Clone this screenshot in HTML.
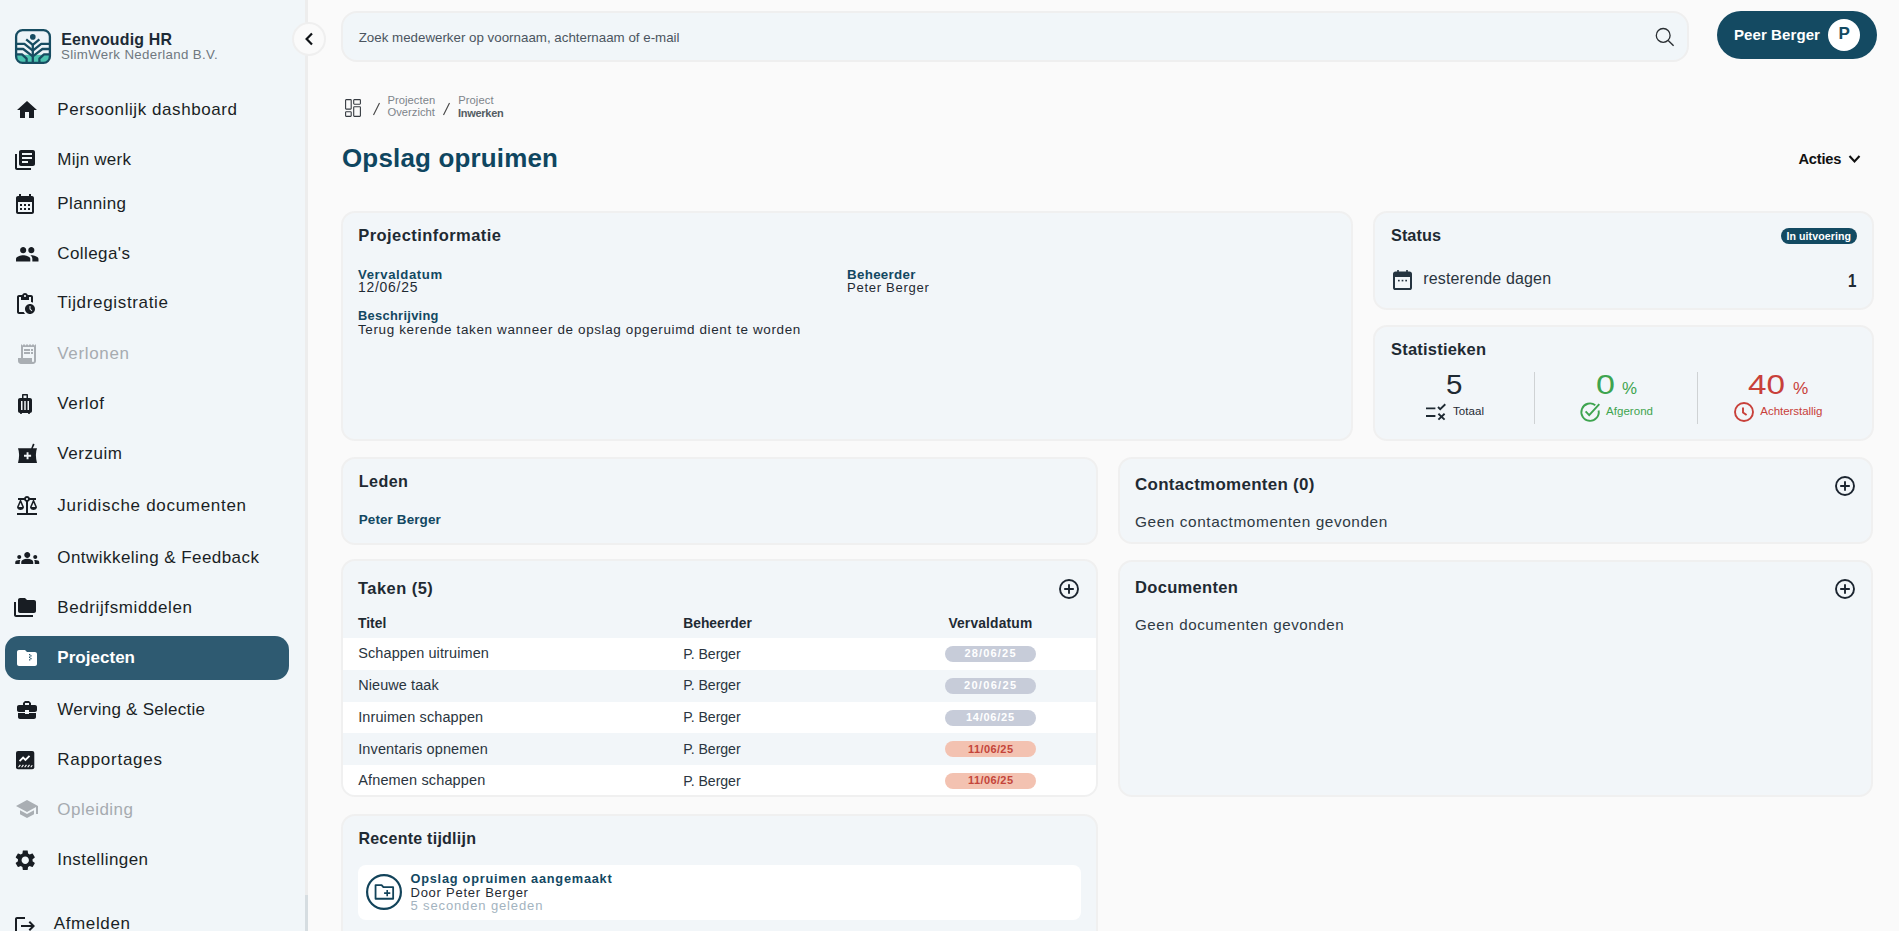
<!DOCTYPE html>
<html lang="nl"><head><meta charset="utf-8"><title>Opslag opruimen</title>
<style>
html,body{margin:0;padding:0;width:1899px;height:931px;overflow:hidden;background:#fafafa;font-family:"Liberation Sans",sans-serif;}
.t{position:absolute;white-space:nowrap;}
.a{position:absolute;}
.side{position:absolute;left:0;top:0;width:305px;height:931px;background:#f1f6f9;}
.track{position:absolute;left:305px;top:0;width:3px;height:931px;background:#ededed;}
.thumb{position:absolute;left:305px;top:895px;width:3px;height:36px;background:#d6dde1;}
.card{position:absolute;box-sizing:border-box;background:#f2f6f9;border:2px solid #f0f0f0;border-radius:14px;overflow:hidden;}
.row{position:absolute;left:0;width:100%;}
.badge{position:absolute;left:603px;width:91px;height:16px;border-radius:8px;}
svg{position:absolute;overflow:visible;}
</style></head><body>
<div class="side"></div>
<div class="track"></div>
<div class="thumb"></div>
<div class="a" style="left:5px;top:636px;width:284px;height:44px;border-radius:14px;background:#2e5a71"></div>

<!-- logo -->
<svg style="left:14.8px;top:28.8px" width="36" height="35" viewBox="0 0 36 35">
  <defs><clipPath id="lc"><rect x="1" y="1" width="34" height="33" rx="6.5"/></clipPath></defs>
  <rect x="1" y="1" width="34" height="33" rx="6.5" fill="#edf4f8"/>
  <g clip-path="url(#lc)">
    <rect x="0" y="25.8" width="36" height="10" fill="#4cc3b0"/>
    <g fill="none" stroke="#174d62" stroke-width="2.3" stroke-linejoin="round">
      <path d="M11.2 10.3 L17.8 15.8 L24.4 10.3"/>
      <path d="M17.8 15 L17.8 35"/>
      <path d="M0 14.8 L9.4 14.8 L17.8 21.6 L26.2 14.8 L36 14.8"/>
      <path d="M0 20 L8.2 20 L17.8 27.4 L27.4 20 L36 20"/>
      <path d="M0 25.4 L7 25.4 L11.6 29.6 L11.6 35 M36 25.4 L29 25.4 L24.4 29.6 L24.4 35"/>
    </g>
  </g>
  <circle cx="17.8" cy="7.9" r="2.8" fill="#174d62"/>
  <rect x="1.1" y="1.1" width="33.8" height="32.8" rx="6.5" fill="none" stroke="#174d62" stroke-width="2.3"/>
</svg>

<!-- nav icons -->
<svg style="left:15.4px;top:97.8px" width="24" height="24" viewBox="0 0 24 24"><path fill="#181d23" d="M10 20v-6h4v6h5v-8h3L12 3 2 12h3v8z"/></svg>
<svg style="left:13px;top:147.7px" width="24" height="24" viewBox="0 0 24 24"><path fill="#181d23" d="M4 6H2v14c0 1.1.9 2 2 2h14v-2H4V6zm16-4H8c-1.1 0-2 .9-2 2v12c0 1.1.9 2 2 2h12c1.1 0 2-.9 2-2V4c0-1.1-.9-2-2-2zm-1 9H9V9h10v2zm-4 4H9v-2h6v2zm4-8H9V5h10v2z"/></svg>
<svg style="left:13px;top:192px" width="24" height="24" viewBox="0 0 24 24"><path fill="#181d23" d="M19 4h-1V2h-2v2H8V2H6v2H5c-1.11 0-1.99.9-1.99 2L3 20c0 1.1.89 2 2 2h14c1.1 0 2-.9 2-2V6c0-1.1-.9-2-2-2zm0 16H5V10h14v10zM9 14H7v-2h2v2zm4 0h-2v-2h2v2zm4 0h-2v-2h2v2zm-8 4H7v-2h2v2zm4 0h-2v-2h2v2zm4 0h-2v-2h2v2z"/></svg>
<svg style="left:14.7px;top:242px" width="24.5" height="24.5" viewBox="0 0 24 24"><path fill="#181d23" d="M16 11c1.66 0 2.99-1.34 2.99-3S17.66 5 16 5c-1.66 0-3 1.34-3 3s1.34 3 3 3zm-8 0c1.66 0 2.99-1.34 2.99-3S9.66 5 8 5C6.34 5 5 6.34 5 8s1.34 3 3 3zm0 2c-2.33 0-7 1.17-7 3.5V19h14v-2.5c0-2.33-4.67-3.5-7-3.5zm8 0c-.29 0-.62.02-.97.05 1.16.84 1.97 1.97 1.97 3.45V19h6v-2.5c0-2.33-4.67-3.5-7-3.5z"/></svg>
<svg style="left:12.7px;top:292px" width="24" height="24" viewBox="0 0 24 24"><path fill="#181d23" d="M17 12c-2.76 0-5 2.24-5 5s2.24 5 5 5 5-2.24 5-5-2.24-5-5-5zm1.65 7.35L16.5 17.2V14h1v2.79l1.85 1.85-.7.71zM18 3h-3.18C14.4 1.84 13.3 1 12 1s-2.4.84-2.82 2H6c-1.1 0-2 .9-2 2v15c0 1.1.9 2 2 2h6.11c-.59-.57-1.07-1.25-1.42-2H6V5h2v3h8V5h2v5.08c.71.1 1.38.31 2 .6V5c0-1.1-.9-2-2-2zm-6 2c-.55 0-1-.45-1-1s.45-1 1-1 1 .45 1 1-.45 1-1 1z"/></svg>
<svg style="left:14.8px;top:342px" width="24" height="24" viewBox="0 0 24 24"><g fill="#a9aeb3"><path d="M19.5 3.5 18 2l-1.5 1.5L15 2l-1.5 1.5L12 2l-1.5 1.5L9 2 7.5 3.5 6 2v14H3v3c0 1.66 1.34 3 3 3h12c1.66 0 3-1.34 3-3V2l-1.5 1.5zM19 19c0 .55-.45 1-1 1s-1-.45-1-1v-3H8V5h11v14z"/><path d="M9 7h6v2H9zm7 0h2v2h-2zm-7 3h6v2H9zm7 0h2v2h-2z"/></g></svg>
<svg style="left:12.8px;top:392px" width="24" height="24" viewBox="0 0 24 24"><path fill="#181d23" d="M17 6h-2V3c0-.55-.45-1-1-1h-4c-.55 0-1 .45-1 1v3H7c-1.1 0-2 .9-2 2v11c0 1.1.9 2 2 2 0 .55.45 1 1 1s1-.45 1-1h6c0 .55.45 1 1 1s1-.45 1-1c1.1 0 2-.9 2-2V8c0-1.1-.9-2-2-2zM9.5 18H8V9h1.5v9zm3.25 0h-1.5V9h1.5v9zm.75-12h-3V3.5h3V6zM16 18h-1.5V9H16v9z"/></svg>
<svg style="left:17.6px;top:442.7px" width="19" height="20" viewBox="0 0 19 20"><path fill="#181d23" d="M0 5.3 H19 Q16.8 11.3 19 20 H0 Q2.2 11.3 0 5.3 Z M13.2 5.3 L15 0.6 L16.6 1.6 L14.8 5.3 Z"/><path fill="#f1f6f9" d="M8.6 9.2h1.9v2.6h2.6v1.9h-2.6v2.6H8.6v-2.6H6v-1.9h2.6z"/></svg>
<svg style="left:14.7px;top:493.7px" width="24" height="24" viewBox="0 0 24 24"><path fill="#181d23" d="M13 7.83c.85-.3 1.530-.98 1.83-1.83H18l-3 7c0 1.66 1.57 3 3.5 3s3.5-1.34 3.5-3l-3-7h2V4h-6.17c-.41-1.170-1.52-2-2.83-2s-2.42.83-2.83 2H3v2h2l-3 7c0 1.66 1.57 3 3.5 3S9 14.66 9 13L6 6h3.17c.3.85.98 1.53 1.83 1.83V19H2v2h20v-2h-9V7.83zM20.37 13h-3.74l1.87-4.36L20.370 13zm-13 0H3.63L5.5 8.64 7.37 13zM12 6c-.55 0-1-.45-1-1s.45-1 1-1 1 .45 1 1-.45 1-1 1z"/></svg>
<svg style="left:14.6px;top:546px" width="24.5" height="24" viewBox="0 0 24 24"><path fill="#181d23" d="M12 12.75c1.63 0 3.07.39 4.24.9 1.08.48 1.76 1.56 1.76 2.73V18H6v-1.61c0-1.18.68-2.26 1.76-2.73 1.17-.52 2.61-.91 4.24-.91zM4 13c1.1 0 2-.9 2-2s-.9-2-2-2-2 .9-2 2 .9 2 2 2zm1.13 1.1c-.37-.06-.74-.1-1.13-.1-.99 0-1.930.21-2.78.58C.48 14.9 0 15.62 0 16.43V18h4.5v-1.61c0-.83.23-1.61.63-2.29zM20 13c1.1 0 2-.9 2-2s-.9-2-2-2-2 .9-2 2 .9 2 2 2zm4 3.43c0-.81-.48-1.53-1.22-1.85-.85-.37-1.79-.58-2.78-.58-.39 0-.76.04-1.13.1.4.68.63 1.46.63 2.29V18H24v-1.57zM12 6c1.66 0 3 1.34 3 3s-1.34 3-3 3-3-1.34-3-3 1.34-3 3-3z"/></svg>
<svg style="left:13px;top:596px" width="24" height="24" viewBox="0 0 24 24"><g fill="#181d23"><path d="M3 6H1v13c0 1.1.9 2 2 2h17v-2H3V6z"/><path d="M21 4h-7l-2-2H7c-1.1 0-1.99.9-1.99 2L5 15c0 1.1.9 2 2 2h14c1.1 0 2-.9 2-2V6c0-1.1-.9-2-2-2z"/></g></svg>
<svg style="left:14.7px;top:645.8px" width="24" height="24" viewBox="0 0 24 24"><path fill="#ffffff" d="M4 4h6l2 2h8c1.1 0 2 .9 2 2v10c0 1.1-.9 2-2 2H4c-1.1 0-2-.9-2-2V6c0-1.1.9-2 2-2z"/><path fill="#2e5a71" d="M14 8h1.3v1.3H14zM15.3 9.3h1.3v1.3h-1.3zM14 10.6h1.3v1.3H14zM15.3 11.9h1.3v1.3h-1.3zM14 13.2h1.3v1.3H14z"/></svg>
<svg style="left:15px;top:697.7px" width="24" height="24" viewBox="0 0 24 24"><path fill="#181d23" d="M10 16v-1H3.01L3 19c0 1.11.89 2 2 2h14c1.11 0 2-.89 2-2v-4h-7v1h-4zm10-9h-4.01V5l-2-2h-4l-2 2v2H4c-1.1 0-2 .9-2 2v3c0 1.11.89 2 2 2h6v-2h4v2h6c1.1 0 2-.9 2-2V9c0-1.1-.9-2-2-2zm-6 0h-4V5h4v2z"/></svg>
<svg style="left:15.7px;top:750.7px" width="18.3" height="18.3" viewBox="0 0 18 18"><rect x="0" y="0" width="18" height="18" rx="2" fill="#181d23"/><path d="M3.5 10 L7 6.5 L9.3 8.8 L13.3 4.8" fill="none" stroke="#fff" stroke-width="1.8"/><path d="M2.5 16 L4.3 13.6 M5.5 16 L7.3 13.6 M8.5 16 L10.3 13.6 M11.5 16 L13.3 13.6 M14.5 16 L16 14" stroke="#fff" stroke-width="1.1"/></svg>
<svg style="left:15.2px;top:797.2px" width="24" height="24" viewBox="0 0 24 24"><path fill="#a9aeb3" d="M5 13.18v4L12 21l7-3.82v-4L12 17l-7-3.82zM12 3 1 9l11 6 9-4.91V17h2V9L12 3z"/></svg>
<svg style="left:12.8px;top:847.5px" width="24.5" height="24.5" viewBox="0 0 24 24"><path fill="#181d23" d="M19.14 12.94c.04-.3.06-.61.06-.94 0-.32-.02-.64-.07-.94l2.03-1.58c.18-.14.23-.41.12-.61l-1.92-3.32c-.12-.22-.37-.29-.59-.22l-2.39.96c-.5-.38-1.03-.7-1.62-.94l-.36-2.54c-.04-.24-.24-.41-.48-.41h-3.84c-.24 0-.43.17-.47.41l-.36 2.54c-.59.24-1.13.57-1.62.94l-2.39-.96c-.22-.08-.47 0-.59.22L2.74 8.87c-.12.21-.08.47.12.61l2.03 1.58c-.05.3-.09.63-.09.94s.02.64.07.94l-2.03 1.58c-.18.14-.23.41-.12.61l1.92 3.32c.12.22.37.29.59.22l2.39-.96c.5.38 1.03.7 1.62.94l.36 2.54c.05.24.24.41.48.41h3.84c.24 0 .44-.17.47-.41l.36-2.54c.59-.24 1.13-.56 1.62-.94l2.39.96c.22.08.47 0 .59-.22l1.92-3.32c.12-.22.07-.47-.12-.61l-2.01-1.58zM12 15.6c-1.98 0-3.6-1.62-3.6-3.6s1.62-3.6 3.6-3.6 3.6 1.62 3.6 3.6-1.62 3.6-3.6 3.6z"/></svg>
<svg style="left:13px;top:913.7px" width="24" height="24" viewBox="0 0 24 24"><path fill="#181d23" d="M17 7l-1.41 1.41L18.17 11H8v2h10.17l-2.58 2.58L17 17l5-5zM4 5h8V3H4c-1.1 0-2 .9-2 2v14c0 1.1.9 2 2 2h8v-2H4V5z"/></svg>

<!-- collapse button -->
<div class="a" style="left:292.4px;top:22px;width:34px;height:34px;box-sizing:border-box;border-radius:50%;background:#fafafa;border:2px solid #efefef"></div>
<svg style="left:303px;top:32px" width="12" height="14" viewBox="0 0 12 14"><path d="M9 1.5 L3.6 7 L9 12.5" fill="none" stroke="#0e1216" stroke-width="2.2"/></svg>

<!-- search -->
<div class="a" style="left:341px;top:11px;width:1348px;height:51px;box-sizing:border-box;border-radius:16px;background:#f1f6f9;border:2px solid #efefef"></div>
<svg style="left:1654px;top:26px" width="22" height="22" viewBox="0 0 22 22"><circle cx="9.2" cy="9.4" r="6.9" fill="none" stroke="#2a2f33" stroke-width="1.3"/><path d="M14.2 14.4 L19.6 19.8" stroke="#2a2f33" stroke-width="1.4"/></svg>

<!-- user button -->
<div class="a" style="left:1717px;top:11px;width:160px;height:48px;border-radius:24px;background:#144a62"></div>
<div class="a" style="left:1828px;top:19px;width:32px;height:32px;border-radius:50%;background:#ffffff"></div>
<div class="t" style="left:1838.4px;top:24.6px;font-size:17px;line-height:17px;font-weight:700;color:#144a62">P</div>

<!-- breadcrumb -->
<svg style="left:345px;top:99px" width="16" height="18" viewBox="0 0 16 18"><g fill="none" stroke="#363b41" stroke-width="1.1"><rect x="0.6" y="0.6" width="5.6" height="9.5" rx="0.6"/><rect x="0.6" y="12.7" width="5.6" height="4.7" rx="0.6"/><rect x="8.7" y="0.6" width="6.7" height="4.6" rx="0.6"/><rect x="8.7" y="7.7" width="6.7" height="9.7" rx="0.6"/></g></svg>
<svg style="left:372px;top:102px" width="9" height="14" viewBox="0 0 9 14"><path d="M7.5 1 L1.5 13" stroke="#444" stroke-width="1.1"/></svg>
<svg style="left:442px;top:102px" width="9" height="14" viewBox="0 0 9 14"><path d="M7.5 1 L1.5 13" stroke="#444" stroke-width="1.1"/></svg>

<!-- acties chevron -->
<svg style="left:1848px;top:154px" width="13" height="10" viewBox="0 0 13 10"><path d="M1.5 2 L6.5 7.5 L11.5 2" fill="none" stroke="#111" stroke-width="2.1"/></svg>

<!-- cards -->
<div class="card" style="left:341px;top:211px;width:1012px;height:230px"></div>
<div class="card" style="left:1373px;top:211px;width:501px;height:99px"></div>
<div class="card" style="left:1373px;top:325px;width:501px;height:116px"></div>
<div class="card" style="left:341px;top:457px;width:757px;height:88px"></div>
<div class="card" style="left:1118px;top:457px;width:755px;height:87px"></div>
<div class="card" style="left:341px;top:559px;width:757px;height:238px">
  <div class="row" style="top:77px;height:32px;background:#ffffff"></div>
  <div class="row" style="top:141px;height:31px;background:#ffffff"></div>
  <div class="row" style="top:204px;height:40px;background:#ffffff"></div>
</div>
<div class="card" style="left:1118px;top:560px;width:755px;height:237px"></div>
<div class="card" style="left:341px;top:814px;width:757px;height:140px">
  <div class="a" style="left:15px;top:49px;width:723px;height:55px;border-radius:8px;background:#ffffff"></div>
</div>

<!-- status calendar -->
<svg style="left:1393px;top:270px" width="19" height="20" viewBox="0 0 19 20"><rect x="1" y="2.5" width="17" height="16.5" rx="1.6" fill="none" stroke="#253440" stroke-width="2"/><rect x="1" y="2.5" width="17" height="4.5" fill="#253440"/><rect x="4.2" y="0" width="1.6" height="3" fill="#253440"/><rect x="13.2" y="0" width="1.6" height="3" fill="#253440"/><rect x="5" y="9.8" width="1.7" height="1.6" fill="#253440"/><rect x="8.65" y="9.8" width="1.7" height="1.6" fill="#253440"/><rect x="12.3" y="9.8" width="1.7" height="1.6" fill="#253440"/></svg>
<div class="a" style="left:1781px;top:228px;width:76px;height:16px;border-radius:8px;background:#134a62"></div>

<!-- stats icons -->
<div class="a" style="left:1534px;top:372px;width:1px;height:52px;background:#cfd2d4"></div>
<div class="a" style="left:1697px;top:372px;width:1px;height:52px;background:#cfd2d4"></div>
<svg style="left:1426px;top:404px" width="21" height="16" viewBox="0 0 21 16"><path d="M0 4.4 H9.4 M0 12 H9.4" stroke="#1f2a33" stroke-width="1.9"/><path d="M12 3 L14.2 5.2 L19.3 0.3" fill="none" stroke="#1f2a33" stroke-width="1.9"/><path d="M12.4 9.8 L18.6 15.6 M18.6 9.8 L12.4 15.6" stroke="#1f2a33" stroke-width="1.9"/></svg>
<svg style="left:1580px;top:402px" width="21" height="20" viewBox="0 0 21 20"><path d="M18.6 8.5 A8.7 8.7 0 1 1 15.3 3.2" fill="none" stroke="#3ea44f" stroke-width="1.9"/><path d="M5.6 9.4 L9.2 13.1 L19.3 2.2" fill="none" stroke="#3ea44f" stroke-width="1.9"/></svg>
<svg style="left:1734px;top:402px" width="20" height="20" viewBox="0 0 20 20"><circle cx="10" cy="10" r="9" fill="none" stroke="#c8403a" stroke-width="1.9"/><path d="M9 5.5 V10.4 L12.6 13" fill="none" stroke="#c8403a" stroke-width="1.9"/></svg>

<!-- plus icons -->
<svg style="left:1058.5px;top:579px" width="20" height="20" viewBox="0 0 20 20"><circle cx="10" cy="10" r="9" fill="none" stroke="#1c2530" stroke-width="1.9"/><path d="M10 5.2 V14.8 M5.2 10 H14.8" stroke="#1c2530" stroke-width="1.9"/></svg>
<svg style="left:1835px;top:476px" width="20" height="20" viewBox="0 0 20 20"><circle cx="10" cy="10" r="9" fill="none" stroke="#1c2530" stroke-width="1.9"/><path d="M10 5.2 V14.8 M5.2 10 H14.8" stroke="#1c2530" stroke-width="1.9"/></svg>
<svg style="left:1835px;top:579px" width="20" height="20" viewBox="0 0 20 20"><circle cx="10" cy="10" r="9" fill="none" stroke="#1c2530" stroke-width="1.9"/><path d="M10 5.2 V14.8 M5.2 10 H14.8" stroke="#1c2530" stroke-width="1.9"/></svg>

<!-- date badges -->
<div class="a" style="left:945px;top:646px;width:91px;height:16px;border-radius:8px;background:#c7ccd9"></div>
<div class="a" style="left:945px;top:678px;width:91px;height:16px;border-radius:8px;background:#c7ccd9"></div>
<div class="a" style="left:945px;top:709.5px;width:91px;height:16px;border-radius:8px;background:#c7ccd9"></div>
<div class="a" style="left:945px;top:741px;width:91px;height:16px;border-radius:8px;background:#f3c2b1"></div>
<div class="a" style="left:945px;top:773px;width:91px;height:16px;border-radius:8px;background:#f3c2b1"></div>

<!-- timeline icon -->
<svg style="left:365.8px;top:874px" width="36" height="36" viewBox="0 0 36 36"><circle cx="18" cy="18" r="16.9" fill="none" stroke="#12435a" stroke-width="2.2"/><path d="M9.55 11.05 H15.6 L17.4 13.2 H27.15 V24.75 H9.55 Z" fill="none" stroke="#12435a" stroke-width="1.8" stroke-linejoin="round"/><path d="M21.2 16 V22.2 M18.1 19.1 H24.3" stroke="#12435a" stroke-width="1.6"/></svg>

<div class="t" style="left:61.20px;top:31.51px;font-size:15.93px;line-height:15.93px;letter-spacing:0.178px;font-weight:700;color:#1d2b36;">Eenvoudig HR</div>
<div class="t" style="left:61.00px;top:47.77px;font-size:13.27px;line-height:13.27px;letter-spacing:0.356px;font-weight:400;color:#6f7880;">SlimWerk Nederland B.V.</div>
<div class="t" style="left:57.30px;top:100.71px;font-size:17.0px;line-height:17.0px;letter-spacing:0.574px;font-weight:400;color:#1a1f25">Persoonlijk dashboard</div>
<div class="t" style="left:57.30px;top:151.01px;font-size:17.0px;line-height:17.0px;letter-spacing:0.234px;font-weight:400;color:#1a1f25">Mijn werk</div>
<div class="t" style="left:57.30px;top:194.71px;font-size:17.0px;line-height:17.0px;letter-spacing:0.361px;font-weight:400;color:#1a1f25">Planning</div>
<div class="t" style="left:57.30px;top:244.71px;font-size:17.0px;line-height:17.0px;letter-spacing:0.412px;font-weight:400;color:#1a1f25">Collega's</div>
<div class="t" style="left:57.30px;top:293.71px;font-size:17.0px;line-height:17.0px;letter-spacing:0.664px;font-weight:400;color:#1a1f25">Tijdregistratie</div>
<div class="t" style="left:57.30px;top:344.71px;font-size:17.0px;line-height:17.0px;letter-spacing:0.656px;font-weight:400;color:#a6abb0">Verlonen</div>
<div class="t" style="left:57.30px;top:394.71px;font-size:17.0px;line-height:17.0px;letter-spacing:0.636px;font-weight:400;color:#1a1f25">Verlof</div>
<div class="t" style="left:57.30px;top:444.71px;font-size:17.0px;line-height:17.0px;letter-spacing:0.548px;font-weight:400;color:#1a1f25">Verzuim</div>
<div class="t" style="left:57.30px;top:496.71px;font-size:17.0px;line-height:17.0px;letter-spacing:0.693px;font-weight:400;color:#1a1f25">Juridische documenten</div>
<div class="t" style="left:57.30px;top:548.71px;font-size:17.0px;line-height:17.0px;letter-spacing:0.448px;font-weight:400;color:#1a1f25">Ontwikkeling &amp; Feedback</div>
<div class="t" style="left:57.30px;top:598.71px;font-size:17.0px;line-height:17.0px;letter-spacing:0.602px;font-weight:400;color:#1a1f25">Bedrijfsmiddelen</div>
<div class="t" style="left:57.30px;top:648.71px;font-size:17.0px;line-height:17.0px;letter-spacing:0.028px;font-weight:700;color:#ffffff">Projecten</div>
<div class="t" style="left:57.30px;top:700.71px;font-size:17.0px;line-height:17.0px;letter-spacing:0.258px;font-weight:400;color:#1a1f25">Werving &amp; Selectie</div>
<div class="t" style="left:57.30px;top:750.71px;font-size:17.0px;line-height:17.0px;letter-spacing:0.733px;font-weight:400;color:#1a1f25">Rapportages</div>
<div class="t" style="left:57.30px;top:800.71px;font-size:17.0px;line-height:17.0px;letter-spacing:0.484px;font-weight:400;color:#a6abb0">Opleiding</div>
<div class="t" style="left:57.30px;top:850.71px;font-size:17.0px;line-height:17.0px;letter-spacing:0.425px;font-weight:400;color:#1a1f25">Instellingen</div>
<div class="t" style="left:53.70px;top:914.71px;font-size:17.0px;line-height:17.0px;letter-spacing:0.639px;font-weight:400;color:#1a1f25">Afmelden</div>
<div class="t" style="left:358.70px;top:30.71px;font-size:13.33px;line-height:13.33px;letter-spacing:0.002px;font-weight:400;color:#4b5560;">Zoek medewerker op voornaam, achternaam of e-mail</div>
<div class="t" style="left:1734.00px;top:26.55px;font-size:15.06px;line-height:15.06px;letter-spacing:0.063px;font-weight:700;color:#ffffff;">Peer Berger</div>
<div class="t" style="left:387.50px;top:94.52px;font-size:11.20px;line-height:11.20px;letter-spacing:0.047px;font-weight:400;color:#7d848a;">Projecten</div>
<div class="t" style="left:387.50px;top:107.42px;font-size:11.20px;line-height:11.20px;letter-spacing:0.026px;font-weight:400;color:#7d848a;">Overzicht</div>
<div class="t" style="left:458.20px;top:94.52px;font-size:11.20px;line-height:11.20px;letter-spacing:0.090px;font-weight:400;color:#7d848a;">Project</div>
<div class="t" style="left:458.00px;top:107.59px;font-size:11.00px;line-height:11.00px;letter-spacing:-0.284px;font-weight:700;color:#545c63;">Inwerken</div>
<div class="t" style="left:342.00px;top:145.20px;font-size:25.98px;line-height:25.98px;letter-spacing:0.168px;font-weight:700;color:#0f4660;">Opslag opruimen</div>
<div class="t" style="left:1798.50px;top:151.92px;font-size:14.62px;line-height:14.62px;letter-spacing:-0.197px;font-weight:700;color:#111111;">Acties</div>
<div class="t" style="left:358.30px;top:227.04px;font-size:16.49px;line-height:16.49px;letter-spacing:0.436px;font-weight:700;color:#1f2a33;">Projectinformatie</div>
<div class="t" style="left:358.00px;top:267.56px;font-size:13.15px;line-height:13.15px;letter-spacing:0.597px;font-weight:700;color:#124862;">Vervaldatum</div>
<div class="t" style="left:358.00px;top:281.02px;font-size:13.91px;line-height:13.91px;letter-spacing:0.748px;font-weight:400;color:#1f2a33;">12/06/25</div>
<div class="t" style="left:847.00px;top:267.50px;font-size:13.35px;line-height:13.35px;letter-spacing:0.308px;font-weight:700;color:#124862;">Beheerder</div>
<div class="t" style="left:847.00px;top:280.93px;font-size:13.08px;line-height:13.08px;letter-spacing:0.695px;font-weight:400;color:#1f2a33;">Peter Berger</div>
<div class="t" style="left:358.00px;top:309.92px;font-size:12.85px;line-height:12.85px;letter-spacing:0.306px;font-weight:700;color:#124862;">Beschrijving</div>
<div class="t" style="left:358.00px;top:322.60px;font-size:13.46px;line-height:13.46px;letter-spacing:0.632px;font-weight:400;color:#1f2a33;">Terug kerende taken wanneer de opslag opgeruimd dient te worden</div>
<div class="t" style="left:1391.00px;top:227.11px;font-size:16.28px;line-height:16.28px;letter-spacing:0.051px;font-weight:700;color:#1f2a33;">Status</div>
<div class="t" style="left:1423.20px;top:270.85px;font-size:16.00px;line-height:16.00px;letter-spacing:0.164px;font-weight:400;color:#2a3540;">resterende dagen</div>
<div class="t" style="left:1848.00px;top:270.91px;font-size:19.00px;line-height:19.00px;letter-spacing:0.000px;font-weight:700;color:#1f2a33;transform:scaleX(0.7966);transform-origin:0 0;">1</div>
<div class="t" style="left:1786.40px;top:231.02px;font-size:10.60px;line-height:10.60px;letter-spacing:0.083px;font-weight:700;color:#ffffff;">In uitvoering</div>
<div class="t" style="left:1391.00px;top:341.03px;font-size:16.49px;line-height:16.49px;letter-spacing:0.221px;font-weight:700;color:#1f2a33;">Statistieken</div>
<div class="t" style="left:1446.00px;top:371.42px;font-size:27.50px;line-height:27.50px;letter-spacing:0.000px;font-weight:400;color:#1f2a33;transform:scaleX(1.0745);transform-origin:0 0;">5</div>
<div class="t" style="left:1453.00px;top:406.46px;font-size:11.50px;line-height:11.50px;letter-spacing:0.065px;font-weight:400;color:#1f2a33;">Totaal</div>
<div class="t" style="left:1595.50px;top:371.42px;font-size:27.50px;line-height:27.50px;letter-spacing:0.000px;font-weight:400;color:#3ea44f;transform:scaleX(1.2383);transform-origin:0 0;">0</div>
<div class="t" style="left:1622.00px;top:381.15px;font-size:16.00px;line-height:16.00px;letter-spacing:0.000px;font-weight:400;color:#3ea44f;transform:scaleX(1.0534);transform-origin:0 0;">%</div>
<div class="t" style="left:1606.00px;top:406.46px;font-size:11.50px;line-height:11.50px;letter-spacing:0.048px;font-weight:400;color:#3ea44f;">Afgerond</div>
<div class="t" style="left:1747.80px;top:371.42px;font-size:27.50px;line-height:27.50px;letter-spacing:0.000px;font-weight:400;color:#c8403a;transform:scaleX(1.2094);transform-origin:0 0;">40</div>
<div class="t" style="left:1792.50px;top:381.15px;font-size:16.00px;line-height:16.00px;letter-spacing:0.000px;font-weight:400;color:#c8403a;transform:scaleX(1.0744);transform-origin:0 0;">%</div>
<div class="t" style="left:1760.30px;top:406.46px;font-size:11.50px;line-height:11.50px;letter-spacing:-0.037px;font-weight:400;color:#c8403a;">Achterstallig</div>
<div class="t" style="left:358.70px;top:473.45px;font-size:16.12px;line-height:16.12px;letter-spacing:0.456px;font-weight:700;color:#1f2a33;">Leden</div>
<div class="t" style="left:358.70px;top:513.49px;font-size:13.47px;line-height:13.47px;letter-spacing:0.112px;font-weight:700;color:#124862;">Peter Berger</div>
<div class="t" style="left:1135.00px;top:476.83px;font-size:16.97px;line-height:16.97px;letter-spacing:0.281px;font-weight:700;color:#1f2a33;">Contactmomenten (0)</div>
<div class="t" style="left:1135.00px;top:514.24px;font-size:15.42px;line-height:15.42px;letter-spacing:0.569px;font-weight:400;color:#2f3a44;">Geen contactmomenten gevonden</div>
<div class="t" style="left:1135.00px;top:580.00px;font-size:16.53px;line-height:16.53px;letter-spacing:0.317px;font-weight:700;color:#1f2a33;">Documenten</div>
<div class="t" style="left:1135.00px;top:617.47px;font-size:15.15px;line-height:15.15px;letter-spacing:0.585px;font-weight:400;color:#2f3a44;">Geen documenten gevonden</div>
<div class="t" style="left:358.00px;top:579.71px;font-size:16.41px;line-height:16.41px;letter-spacing:0.488px;font-weight:700;color:#1f2a33;">Taken (5)</div>
<div class="t" style="left:358.00px;top:616.82px;font-size:13.80px;line-height:13.80px;letter-spacing:0.046px;font-weight:700;color:#1f2a33;">Titel</div>
<div class="t" style="left:683.20px;top:616.82px;font-size:13.80px;line-height:13.80px;letter-spacing:0.041px;font-weight:700;color:#1f2a33;">Beheerder</div>
<div class="t" style="left:948.40px;top:616.82px;font-size:13.80px;line-height:13.80px;letter-spacing:0.172px;font-weight:700;color:#1f2a33;">Vervaldatum</div>
<div class="t" style="left:358.20px;top:646.44px;font-size:14.48px;line-height:14.48px;letter-spacing:0.120px;font-weight:400;color:#2a3540;">Schappen uitruimen</div>
<div class="t" style="left:683.20px;top:646.72px;font-size:14.14px;line-height:14.14px;letter-spacing:-0.052px;font-weight:400;color:#2a3540;">P. Berger</div>
<div class="t" style="left:964.50px;top:648.49px;font-size:11.00px;line-height:11.00px;letter-spacing:1.169px;font-weight:700;color:#ffffff;">28/06/25</div>
<div class="t" style="left:358.20px;top:678.22px;font-size:14.44px;line-height:14.44px;letter-spacing:0.109px;font-weight:400;color:#2a3540;">Nieuwe taak</div>
<div class="t" style="left:683.20px;top:678.47px;font-size:14.14px;line-height:14.14px;letter-spacing:-0.052px;font-weight:400;color:#2a3540;">P. Berger</div>
<div class="t" style="left:964.00px;top:680.24px;font-size:11.00px;line-height:11.00px;letter-spacing:1.312px;font-weight:700;color:#ffffff;">20/06/25</div>
<div class="t" style="left:358.20px;top:709.95px;font-size:14.47px;line-height:14.47px;letter-spacing:0.120px;font-weight:400;color:#2a3540;">Inruimen schappen</div>
<div class="t" style="left:683.20px;top:710.22px;font-size:14.14px;line-height:14.14px;letter-spacing:-0.052px;font-weight:400;color:#2a3540;">P. Berger</div>
<div class="t" style="left:966.00px;top:711.99px;font-size:11.00px;line-height:11.00px;letter-spacing:0.740px;font-weight:700;color:#ffffff;">14/06/25</div>
<div class="t" style="left:358.20px;top:741.68px;font-size:14.50px;line-height:14.50px;letter-spacing:0.129px;font-weight:400;color:#2a3540;">Inventaris opnemen</div>
<div class="t" style="left:683.20px;top:741.97px;font-size:14.14px;line-height:14.14px;letter-spacing:-0.052px;font-weight:400;color:#2a3540;">P. Berger</div>
<div class="t" style="left:968.00px;top:743.74px;font-size:11.00px;line-height:11.00px;letter-spacing:0.398px;font-weight:700;color:#c4453a;">11/06/25</div>
<div class="t" style="left:358.20px;top:773.43px;font-size:14.50px;line-height:14.50px;letter-spacing:0.145px;font-weight:400;color:#2a3540;">Afnemen schappen</div>
<div class="t" style="left:683.20px;top:773.72px;font-size:14.14px;line-height:14.14px;letter-spacing:-0.052px;font-weight:400;color:#2a3540;">P. Berger</div>
<div class="t" style="left:968.00px;top:775.49px;font-size:11.00px;line-height:11.00px;letter-spacing:0.398px;font-weight:700;color:#c4453a;">11/06/25</div>
<div class="t" style="left:358.40px;top:830.14px;font-size:16.02px;line-height:16.02px;letter-spacing:0.245px;font-weight:700;color:#1f2a33;">Recente tijdlijn</div>
<div class="t" style="left:410.50px;top:872.68px;font-size:12.77px;line-height:12.77px;letter-spacing:0.755px;font-weight:700;color:#124862;">Opslag opruimen aangemaakt</div>
<div class="t" style="left:410.50px;top:885.56px;font-size:13.04px;line-height:13.04px;letter-spacing:0.732px;font-weight:400;color:#1f2a33;">Door Peter Berger</div>
<div class="t" style="left:410.50px;top:898.55px;font-size:13.05px;line-height:13.05px;letter-spacing:0.845px;font-weight:400;color:#a3b3c0;">5 seconden geleden</div>
</body></html>
